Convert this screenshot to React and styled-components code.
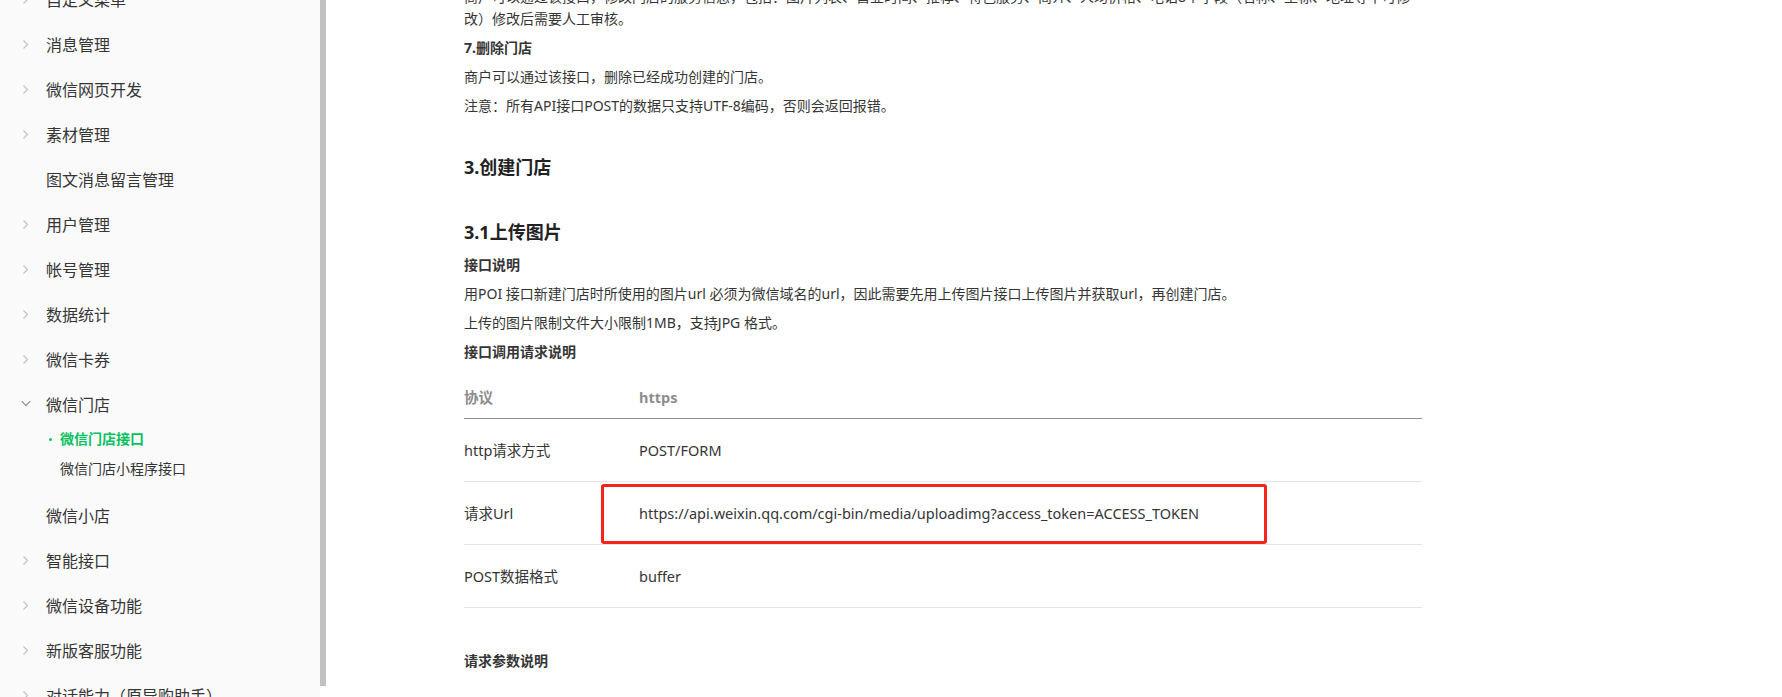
import React from 'react';
import styled, { createGlobalStyle } from 'styled-components';

const GlobalStyle = createGlobalStyle`
  html, body {
    margin: 0;
    padding: 0;
    background: #fff;
    overflow: hidden;
  }
  body {
    font-family: "Noto Sans", "Noto Sans CJK SC", sans-serif;
    color: #353535;
  }
`;

const Page = styled.div`
  display: flex;
  height: 697px;
  overflow: hidden;
`;

const Sidebar = styled.aside`
  display: flex;
  flex: 0 0 326px;
  height: 100%;
`;

const Nav = styled.nav`
  width: 320px;
  height: 100%;
  background: #fafafa;
  overflow: hidden;
`;

const NavList = styled.ul`
  list-style: none;
  margin: -24px 0 0;
  padding: 0;
`;

const NavItem = styled.li`
  display: flex;
  align-items: center;
  height: 45px;
  font-size: 16px;
  color: #353535;
  white-space: nowrap;
`;

const Caret = styled.span`
  display: flex;
  align-items: center;
  flex: 0 0 46px;
  padding-left: 21px;
  box-sizing: border-box;
  color: ${(p) => (p.$open ? '#8c8c8c' : '#c4c4c4')};
`;

const SubList = styled.ul`
  list-style: none;
  margin: -2px 0 0;
  padding: 0 0 8px;
`;

const SubItem = styled.li`
  position: relative;
  height: 30px;
  line-height: 30px;
  padding-left: 60px;
  font-size: 14px;
  font-weight: ${(p) => (p.$active ? 700 : 400)};
  color: ${(p) => (p.$active ? '#07c160' : '#353535')};
  white-space: nowrap;
  &::before {
    content: '';
    display: ${(p) => (p.$active ? 'block' : 'none')};
    position: absolute;
    left: 49px;
    top: 14px;
    width: 3px;
    height: 3px;
    border-radius: 50%;
    background: #07c160;
  }
`;

const Track = styled.div`
  width: 6px;
  height: 100%;
`;

const Thumb = styled.div`
  width: 6px;
  height: 686px;
  background: #c1c1c1;
`;

const Main = styled.main`
  display: flex;
  flex-direction: column;
  width: 958px;
  margin-top: -14px;
  padding-left: 138px;
`;

const Para = styled.p`
  margin: 0 0 7px;
  font-size: 14px;
  line-height: 22px;
  font-weight: ${(p) => (p.$bold ? 700 : 400)};
  color: #353535;
`;

const Line = styled.span`
  display: block;
  white-space: nowrap;
`;

const Heading = styled.h3`
  margin: 31px 0 10px;
  font-size: 18px;
  line-height: 24px;
  font-weight: 700;
  color: #222;
`;

const Table = styled.table`
  width: 958px;
  margin-top: 6px;
  border-collapse: collapse;
  font-size: 14.5px;
  line-height: 22px;
  color: #353535;
`;

const Th = styled.th`
  text-align: left;
  padding: 10px 0;
  font-weight: 700;
  color: #8d8d8d;
  border-bottom: 1px solid #8f8f8f;
  width: ${(p) => p.$w || 'auto'};
`;

const Td = styled.td`
  position: relative;
  padding: 20px 0;
  border-bottom: 1px solid #e4e4e4;
  white-space: nowrap;
`;

const Highlight = styled.span`
  position: absolute;
  left: -38px;
  top: 2px;
  width: 666px;
  height: 60px;
  box-sizing: border-box;
  border: 3px solid #f7231c;
  border-radius: 3px;
  pointer-events: none;
`;

const SectionTitle = styled(Para)`
  margin-top: 42px;
`;

const ChevronRight = () => (
  <svg width="10" height="10" viewBox="0 0 10 10">
    <path d="M2.5 1.5 L6.5 5.5 L2.5 9.5" fill="none" stroke="currentColor" strokeWidth="1.2" />
  </svg>
);

const ChevronDown = () => (
  <svg width="10" height="10" viewBox="0 0 10 10">
    <path d="M0.8 2.2 L5 6.6 L9.2 2.2" fill="none" stroke="currentColor" strokeWidth="1.2" />
  </svg>
);

const menu = [
  { name: '自定义菜单', arrow: true },
  { name: '消息管理', arrow: true },
  { name: '微信网页开发', arrow: true },
  { name: '素材管理', arrow: true },
  { name: '图文消息留言管理', arrow: false },
  { name: '用户管理', arrow: true },
  { name: '帐号管理', arrow: true },
  { name: '数据统计', arrow: true },
  { name: '微信卡券', arrow: true },
  { name: '微信门店', arrow: true, open: true, children: [
    { name: '微信门店接口', active: true },
    { name: '微信门店小程序接口' },
  ] },
  { name: '微信小店', arrow: false },
  { name: '智能接口', arrow: true },
  { name: '微信设备功能', arrow: true },
  { name: '新版客服功能', arrow: true },
  { name: '对话能力（原导购助手）', arrow: true },
];

const rows = [
  ['http请求方式', 'POST/FORM'],
  ['请求Url', 'https://api.weixin.qq.com/cgi-bin/media/uploadimg?access_token=ACCESS_TOKEN', true],
  ['POST数据格式', 'buffer'],
];

const App = () => {
  return (
    <>
      <GlobalStyle />
      <Page>
        <Sidebar>
          <Nav>
            <NavList>
              {menu.map((item) => (
                <React.Fragment key={item.name}>
                  <NavItem>
                    <Caret $open={item.open}>
                      {item.arrow && (item.open ? <ChevronDown /> : <ChevronRight />)}
                    </Caret>
                    {item.name}
                  </NavItem>
                  {item.children && (
                    <SubList>
                      {item.children.map((c) => (
                        <SubItem key={c.name} $active={c.active}>{c.name}</SubItem>
                      ))}
                    </SubList>
                  )}
                </React.Fragment>
              ))}
            </NavList>
          </Nav>
          <Track>
            <Thumb />
          </Track>
        </Sidebar>

        <Main>
          <Para>
            <Line>商户可以通过该接口，修改门店的服务信息，包括：图片列表、营业时间、推荐、特色服务、简介、人均价格、电话8个字段（名称、坐标、地址等不可修</Line>
            <Line>改）修改后需要人工审核。</Line>
          </Para>
          <Para $bold>7.删除门店</Para>
          <Para>商户可以通过该接口，删除已经成功创建的门店。</Para>
          <Para>注意：所有API接口POST的数据只支持UTF-8编码，否则会返回报错。</Para>

          <Heading>3.创建门店</Heading>
          <Heading>3.1上传图片</Heading>

          <Para $bold>接口说明</Para>
          <Para>用POI 接口新建门店时所使用的图片url 必须为微信域名的url，因此需要先用上传图片接口上传图片并获取url，再创建门店。</Para>
          <Para>上传的图片限制文件大小限制1MB，支持JPG 格式。</Para>
          <Para $bold>接口调用请求说明</Para>

          <Table>
            <thead>
              <tr>
                <Th $w="175px">协议</Th>
                <Th>https</Th>
              </tr>
            </thead>
            <tbody>
              {rows.map(([label, value, marked]) => (
                <tr key={label}>
                  <Td>{label}</Td>
                  <Td>
                    {marked && <Highlight />}
                    {value}
                  </Td>
                </tr>
              ))}
            </tbody>
          </Table>

          <SectionTitle $bold>请求参数说明</SectionTitle>
        </Main>
      </Page>
    </>
  );
};

export default App;
